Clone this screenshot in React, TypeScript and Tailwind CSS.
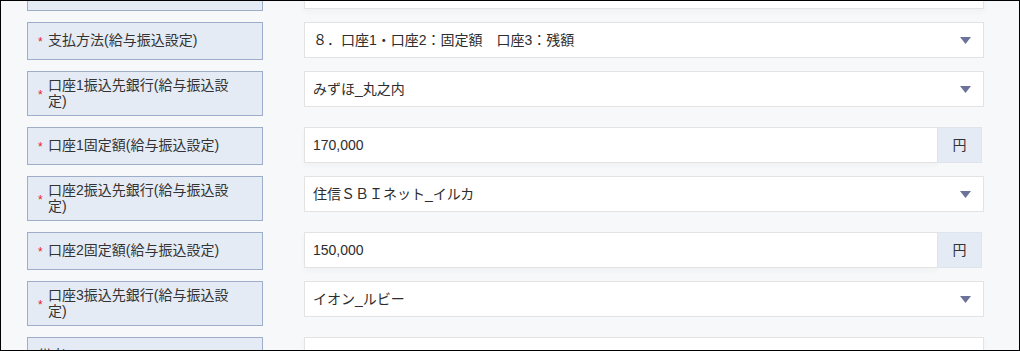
import type { ReactNode } from "react";

type Field =
  | { label: string; required?: boolean; kind: "select"; value: string }
  | { label: string; required?: boolean; kind: "yen"; value: string }
  | { label: string; required?: boolean; kind: "text"; value: string };

const fields: Field[] = [
  { label: "", kind: "text", value: "" },
  { label: "支払方法(給与振込設定)", required: true, kind: "select", value: "８．口座1・口座2：固定額　口座3：残額" },
  { label: "口座1振込先銀行(給与振込設定)", required: true, kind: "select", value: "みずほ_丸之内" },
  { label: "口座1固定額(給与振込設定)", required: true, kind: "yen", value: "170,000" },
  { label: "口座2振込先銀行(給与振込設定)", required: true, kind: "select", value: "住信ＳＢＩネット_イルカ" },
  { label: "口座2固定額(給与振込設定)", required: true, kind: "yen", value: "150,000" },
  { label: "口座3振込先銀行(給与振込設定)", required: true, kind: "select", value: "イオン_ルビー" },
  { label: "備考", kind: "text", value: "" },
];

function Label({ text, required }: { text: string; required?: boolean }) {
  return (
    <div className="w-[236px] shrink-0 min-h-[38px] flex items-center py-[6px] pl-[10px] pr-[26px] bg-[#e5ebf5] border border-[#9eadc8]">
      {required ? (
        <span className="w-[10px] shrink-0 text-[12px] leading-none text-[#e8202a] mt-[2px]">*</span>
      ) : null}
      <span className="text-[14px] leading-[15.5px] text-[#333]">{text}</span>
    </div>
  );
}

function Control({ field }: { field: Field }): ReactNode {
  if (field.kind === "select") {
    return (
      <div className="w-[680px] h-[36px] bg-white border border-[#e3e3e3] flex items-center justify-between pl-[8px] pr-[12px]">
        <span className="text-[14px] text-[#2d2d2d]">{field.value}</span>
        <svg width="11" height="7" viewBox="0 0 11 7">
          <path d="M0 0 H11 L5.5 7 Z" fill="#6c7299" />
        </svg>
      </div>
    );
  }
  if (field.kind === "yen") {
    return (
      <div className="w-[678px] h-[36px] flex">
        <div className="flex-1 bg-white border border-[#e3e3e3] border-r-0 flex items-center pl-[8px] shadow-[0_3px_5px_rgba(0,0,0,0.03)]">
          <span className="text-[14px] text-[#2d2d2d]">{field.value}</span>
        </div>
        <div className="w-[45px] bg-[#e5ebf5] border border-[#e0e3ea] flex items-center justify-center text-[14px] text-[#333]">
          円
        </div>
      </div>
    );
  }
  return (
    <div className="w-[680px] h-[36px] bg-white border border-[#e3e3e3] shadow-[0_3px_5px_rgba(0,0,0,0.03)] flex items-center pl-[8px]">
      <span className="text-[14px] text-[#2d2d2d]">{field.value}</span>
    </div>
  );
}

export default function App() {
  return (
    <div
      className="w-[1020px] h-[351px] overflow-hidden border border-black bg-[#f7f8fa]"
      style={{ fontFamily: '"Liberation Sans", "Noto Sans CJK JP", sans-serif' }}
    >
      <div className="-mt-[28px] pl-[26px] flex flex-col gap-[11px]">
        {fields.map((f, i) => (
          <div key={i} className="flex items-start gap-[41px]">
            <Label text={f.label} required={f.required} />
            <Control field={f} />
          </div>
        ))}
      </div>
    </div>
  );
}
